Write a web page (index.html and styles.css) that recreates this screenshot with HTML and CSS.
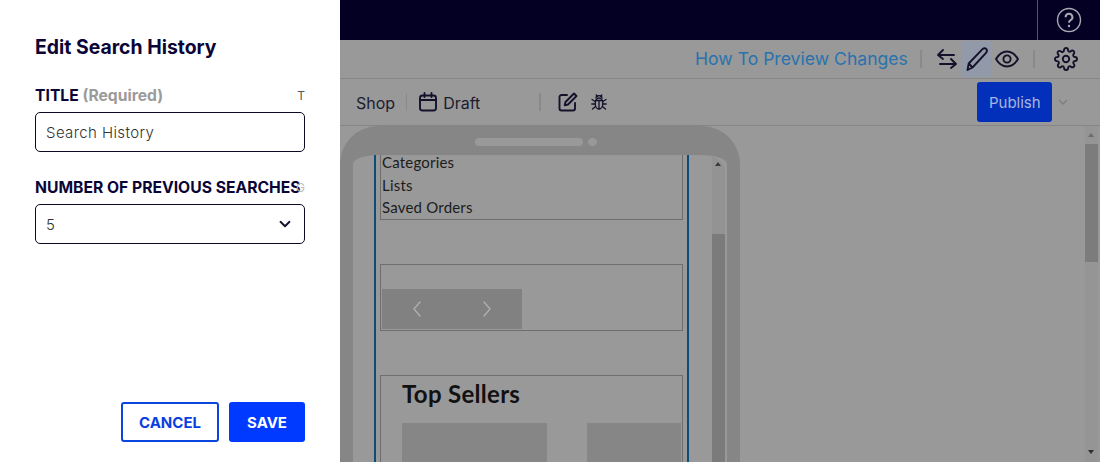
FILE: index.html
```html
<!DOCTYPE html>
<html lang="en">
<head>
    <meta charset="UTF-8">
    <meta name="viewport" content="width=device-width, initial-scale=1.0">
    <title>Edit Search History</title>
    <link rel="stylesheet" href="styles.css">
</head>
<body>
    <!-- Edit drawer -->
    <aside class="drawer">
        <h2 class="drawer-title">Edit Search History</h2>

        <div class="field">
            <div class="field-head">
                <label for="title">TITLE <span class="required">(Required)</span></label>
                <span class="field-type">T</span>
            </div>
            <input type="text" id="title" value="Search History">
        </div>

        <div class="field">
            <div class="field-head">
                <label for="count">NUMBER OF PREVIOUS SEARCHES</label>
                <span class="field-type field-type-overlap">G</span>
            </div>
            <div class="select">
                <span id="count">5</span>
                <svg class="select-chevron" width="12" height="12" viewBox="0 0 12 12"><path d="M1.500 3.800L6 8.200l4.500-4.400" class="stroke-dark"/></svg>
            </div>
        </div>

        <div class="drawer-actions">
            <button class="btn-cancel">CANCEL</button>
            <button class="btn-save">SAVE</button>
        </div>
    </aside>

    <!-- Page behind the drawer -->
    <main class="main">
        <div class="nav">
            <div class="nav-help">
                <svg width="26" height="26" viewBox="0 0 26 26"><circle cx="13" cy="13" r="11.500" fill="none" stroke="#a9a9b4" stroke-width="1.400"/><path d="M9.600 10.200a3.400 3.400 0 1 1 5 3c-1.100.7-1.600 1.200-1.600 2.500" fill="none" stroke="#a9a9b4" stroke-width="2"/><circle cx="13" cy="19" r="1.200" fill="#a9a9b4"/></svg>
            </div>
        </div>

        <div class="bar-top">
            <a class="help-link">How To Preview Changes</a>
            <span class="sep sep-link"></span>
            <svg class="icon-swap" width="22" height="22" viewBox="0 0 22 22"><path d="M7 2L2 7l5 4M2 7h16M15 11l5 5-5 4M20 16H4" class="stroke-dark"/></svg>
            <span class="icon-active">
                <svg width="24" height="26" viewBox="0 0 24 26"><path d="M2.500 24l1.200-6.500L17.500 3.200c1.500-1.500 3.300-1.200 4 0s.6 2.600-.7 4L7.500 21.500zM3.700 17.500l3.800 4" class="stroke-dark"/></svg>
            </span>
            <svg class="icon-eye" width="24" height="18" viewBox="0 0 24 18"><path d="M1 9c3-5 7-7.500 11-7.500S20 4 23 9c-3 5-7 7.500-11 7.500S4 14 1 9z" class="stroke-dark"/><circle cx="12" cy="9" r="3.600" class="stroke-dark"/></svg>
            <span class="sep sep-eye"></span>
            <svg class="icon-gear" width="24" height="24" viewBox="0 0 24 24"><circle cx="12" cy="12" r="3.200" class="stroke-thin"/><path d="M19.400 15a1.650 1.650 0 0 0 .33 1.820l.06.06a2 2 0 1 1-2.830 2.830l-.06-.06a1.650 1.650 0 0 0-2.800 1.170V21a2 2 0 1 1-4 0v-.09a1.650 1.650 0 0 0-2.820-1.120l-.06.06a2 2 0 1 1-2.830-2.830l.06-.06a1.650 1.650 0 0 0-1.170-2.800H3a2 2 0 1 1 0-4h.09a1.650 1.650 0 0 0 1.120-2.820l-.06-.06a2 2 0 1 1 2.830-2.830l.06.06a1.650 1.650 0 0 0 1.820.33H9a1.650 1.650 0 0 0 1-1.510V3a2 2 0 1 1 4 0v.09a1.650 1.650 0 0 0 2.820 1.120l.06-.06a2 2 0 1 1 2.830 2.830l-.06.06a1.650 1.650 0 0 0-.33 1.820V9a1.650 1.650 0 0 0 1.510 1H21a2 2 0 1 1 0 4h-.09a1.650 1.650 0 0 0-1.510 1z" class="stroke-thin"/></svg>
        </div>

        <div class="bar-sub">
            <span class="shop">Shop</span>
            <span class="sep sep-shop"></span>
            <svg class="icon-cal" width="20" height="20" viewBox="0 0 20 20"><rect x="2" y="3.500" width="16" height="15" rx="2.500" class="stroke-dark"/><path d="M2 8h16M6.500 1v4M13.500 1v4" class="stroke-dark"/></svg>
            <span class="draft">Draft</span>
            <span class="sep sep-draft"></span>
            <svg class="icon-edit" width="20" height="20" viewBox="0 0 20 20"><path d="M9 3H3.500A2 2 0 0 0 1.500 5v11.500a2 2 0 0 0 2 2H15a2 2 0 0 0 2-2V11" class="stroke-dark"/><path d="M16 1.500l2.500 2.500-8.500 8.500-3.300.8.800-3.300z" class="stroke-dark"/></svg>
            <svg class="icon-bug" width="16" height="18" viewBox="0 0 16 18"><ellipse cx="8" cy="10.500" rx="3.800" ry="5.500" class="stroke-bug"/><path d="M4.500 7.500h7M8 7.500V16M5 5c0-1.500 1.500-2.300 3-2.300s3 .8 3 2.300M5.200 2l1.300 1.500M10.800 2L9.500 3.500M4.200 8.500L1 6.500M11.800 8.500l3.200-2M4.200 11H.8M11.800 11h3.400M4.600 13.500L1.500 16M11.400 13.500l3.100 2.500" class="stroke-bug"/></svg>
            <button class="btn-publish">Publish</button>
            <svg class="icon-more" width="12" height="12" viewBox="0 0 12 12"><path d="M2 4l4 4 4-4" fill="none" stroke="#7e7e7e" stroke-width="1.300"/></svg>
        </div>

        <div class="canvas">
            <div class="phone">
                <span class="phone-speaker"></span>
                <span class="phone-camera"></span>
                <div class="phone-inner">
                    <div class="screen">
                        <div class="screen-body">
                            <ul class="box menu-box">
                                <li>Categories</li>
                                <li>Lists</li>
                                <li>Saved Orders</li>
                            </ul>

                            <div class="box slider-box">
                                <div class="slider">
                                    <svg width="12" height="18" viewBox="0 0 12 18"><path d="M9 2L3 9l6 7" class="stroke-light"/></svg>
                                    <svg width="12" height="18" viewBox="0 0 12 18"><path d="M3 2l6 7-6 7" class="stroke-light"/></svg>
                                </div>
                            </div>

                            <div class="box sellers-box">
                                <h3>Top Sellers</h3>
                                <div class="products">
                                    <div class="product"></div>
                                    <div class="product product-cut"></div>
                                </div>
                            </div>
                        </div>
                    </div>
                    <div class="phone-scroll">
                        <span class="arrow-up"></span>
                        <div class="phone-thumb"></div>
                    </div>
                </div>
            </div>

            <div class="page-scroll">
                <span class="arrow-up arrow-faint"></span>
                <div class="page-thumb"></div>
                <span class="arrow-down"></span>
            </div>
        </div>
    </main>
</body>
</html>
```

FILE: styles.css
```css
* {
    box-sizing: border-box;
}

html, body {
    height: 100%;
}

body {
    margin: 0;
    display: flex;
    height: 462px;
    overflow: hidden;
    font-family: Inter, "Liberation Sans", sans-serif;
    background-color: #999;
}

/* Drawer */
.drawer {
    width: 340px;
    flex-shrink: 0;
    display: flex;
    flex-direction: column;
    padding: 36px 35px 20px;
    background-color: #fff;
}

.drawer-title {
    margin: 0 0 28px;
    font-size: 19.400px;
    line-height: 22px;
    font-weight: 700;
    color: #0a0536;
}

.field {
    margin-bottom: 26px;
}

.field-head {
    display: flex;
    justify-content: space-between;
    align-items: center;
    height: 18px;
    margin-bottom: 8px;
}

.field-head label {
    font-size: 15.700px;
    font-weight: 700;
    color: #0a0536;
    white-space: nowrap;
}

.required {
    color: #9b9b9b;
}

.field-type {
    font-size: 12px;
    color: #555;
}

.field-type-overlap {
    margin-left: -6px;
    color: #bdbdbd;
}

.field input, .select {
    width: 100%;
    height: 40px;
    padding: 0 10px;
    border: 1px solid #0a0a22;
    border-radius: 5px;
    font-family: inherit;
    font-size: 15px;
    font-weight: 300;
    letter-spacing: 0.400px;
    color: #333;
    background-color: #fff;
}

.select {
    display: flex;
    justify-content: space-between;
    align-items: center;
}

.select-chevron {
    margin-right: 3px;
}

.drawer-actions {
    margin-top: auto;
    display: flex;
    justify-content: flex-end;
    gap: 10px;
}

.drawer-actions button {
    height: 40px;
    border-radius: 3px;
    font-family: inherit;
    font-size: 15px;
    font-weight: 700;
}

.btn-cancel {
    width: 98px;
    border: 2px solid #0a45dd;
    color: #0a3fe0;
    background-color: #fff;
}

.btn-save {
    width: 76px;
    border: none;
    color: #fff;
    background-color: #0039ff;
}

/* Page behind */
.main {
    flex: 1;
    display: flex;
    flex-direction: column;
    min-width: 0;
}

.nav {
    height: 40px;
    display: flex;
    justify-content: flex-end;
    background-color: #040024;
}

.nav-help {
    width: 63px;
    display: flex;
    align-items: center;
    justify-content: center;
    border-left: 1px solid #55536a;
}

.bar-top {
    height: 39px;
    display: flex;
    align-items: center;
    padding-left: 355px;
    border-bottom: 1px solid #868686;
}

.help-link {
    margin-top: -1px;
    font-size: 17.600px;
    color: #2873ad;
    white-space: nowrap;
}

.sep {
    width: 2px;
    height: 18px;
    background-color: #8a8a8a;
}

.sep-link {
    margin: 0 14px 0 12px;
}

.icon-active {
    width: 30px;
    height: 36px;
    margin-left: 4px;
    display: flex;
    align-items: center;
    justify-content: center;
    background-color: #929aa9;
}

.icon-eye {
    margin-left: 3px;
}

.sep-eye {
    margin: 0 0 0 14px;
}

.icon-gear {
    margin-left: 19px;
}

.bar-sub {
    height: 47px;
    display: flex;
    align-items: center;
    padding-left: 16px;
    border-bottom: 1px solid #868686;
    font-size: 16px;
    color: #1d1b30;
}

.shop, .draft {
    margin-top: 1px;
}

.sep-shop {
    width: 1px;
    margin: 0 11px;
}

.draft {
    margin-left: 5px;
}

.sep-draft {
    margin: 0 17px 0 59px;
}

.icon-cal, .icon-edit, .icon-bug {
    flex-shrink: 0;
}

.icon-edit, .icon-bug {
    margin-top: -1px;
}

.icon-bug {
    margin-left: 13px;
}

.btn-publish {
    width: 75px;
    height: 40px;
    margin-left: 370px;
    border: none;
    border-radius: 3px;
    font-family: inherit;
    font-size: 15px;
    color: #a9b6dc;
    background-color: #0330bb;
}

.icon-more {
    margin-left: 5px;
}

.stroke-dark, .stroke-thin, .stroke-bug, .stroke-light {
    fill: none;
    stroke-linecap: round;
    stroke-linejoin: round;
}

.stroke-dark {
    stroke: #14122b;
    stroke-width: 1.900;
}

.stroke-thin {
    stroke: #14122b;
    stroke-width: 1.900;
}

.stroke-bug {
    stroke: #14122b;
    stroke-width: 1.300;
}

.stroke-light {
    stroke: #adadad;
    stroke-width: 1.500;
}

/* Preview canvas */
.canvas {
    flex: 1;
    display: flex;
    min-height: 0;
    overflow: hidden;
}

.phone {
    position: relative;
    width: 400px;
    height: 600px;
    flex-shrink: 0;
    border: solid #868686;
    border-width: 29px 13px 0;
    border-radius: 38px 38px 0 0;
}

.phone-speaker, .phone-camera {
    position: absolute;
    top: -17px;
    height: 8px;
    background-color: #999;
}

.phone-speaker {
    left: 122px;
    width: 108px;
    border-radius: 4px;
}

.phone-camera {
    left: 235px;
    width: 9px;
    border-radius: 50%;
}

.phone-inner {
    height: 100%;
    display: flex;
    padding-right: 2px;
    border-radius: 22px 22px 0 0;
    overflow: hidden;
}

.screen {
    width: 359px;
    padding: 0 23px 0 21px;
}

.screen-body {
    height: 100%;
    padding: 0 4px;
    border: solid #0b4c79;
    border-width: 0 2px;
}

.box {
    width: 303px;
    border: 1px solid #6e6e6e;
}

.menu-box {
    height: 65px;
    margin: 0;
    padding: 0 0 0 1px;
    border-top: none;
    list-style: none;
    font-family: Lato, sans-serif;
    font-size: 15px;
    letter-spacing: 0.200px;
    line-height: 22.500px;
    color: #1c1c1c;
    overflow: hidden;
}

.menu-box li:first-child {
    margin-top: -4px;
}

.slider-box {
    height: 67px;
    margin-top: 44px;
    padding: 24px 0 0 1px;
}

.slider {
    width: 140px;
    height: 40px;
    display: flex;
    align-items: center;
    gap: 58px;
    padding-left: 29px;
    background-color: #818181;
}

.sellers-box {
    height: 200px;
    margin-top: 44px;
    padding-left: 21px;
}

.sellers-box h3 {
    margin: 0;
    padding-top: 3px;
    font-family: Lato, sans-serif;
    font-size: 24px;
    letter-spacing: 0.300px;
    line-height: 30px;
    font-weight: 700;
    color: #111;
}

.products {
    display: flex;
    gap: 40px;
    margin-top: 14px;
}

.product {
    width: 145px;
    height: 60px;
    background-color: #868686;
}

.product-cut {
    width: 94px;
}

.phone-scroll {
    position: relative;
    width: 13px;
    padding-top: 79px;
    background-color: #939393;
}

.phone-thumb {
    height: 400px;
    background-color: #7b7b7b;
}

.arrow-up, .arrow-down {
    position: absolute;
    width: 0;
    height: 0;
    border-left: 3.500px solid transparent;
    border-right: 3.500px solid transparent;
}

.arrow-up {
    border-bottom: 4px solid #3a3a3a;
}

.arrow-down {
    border-top: 4px solid #2e2e2e;
}

.phone-scroll .arrow-up {
    top: 7px;
    left: 3px;
}

.page-scroll {
    position: relative;
    width: 13px;
    margin-left: 345px;
    padding-top: 18px;
    background-color: #959595;
}

.page-thumb {
    height: 118px;
    background-color: #7c7c7c;
}

.page-scroll .arrow-up {
    top: 7px;
    left: 3px;
}

.arrow-faint {
    border-bottom-color: #6c6c6c;
}

.page-scroll .arrow-down {
    bottom: 8px;
    left: 3px;
}
```
